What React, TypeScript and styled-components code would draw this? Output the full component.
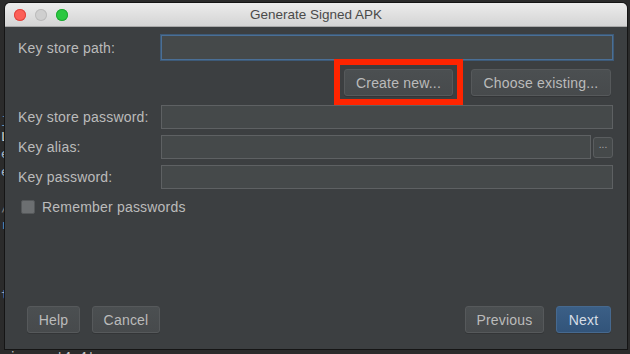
import React from 'react';
import styled, { createGlobalStyle } from 'styled-components';

const GlobalStyle = createGlobalStyle`
  html, body {
    margin: 0;
    padding: 0;
    background: #1f2022;
  }
  body {
    font-family: "Liberation Sans", Arial, sans-serif;
  }
`;

const Desktop = styled.div`
  position: relative;
  width: 630px;
  height: 354px;
  overflow: hidden;
  background: #1f2022;
`;

const Code = styled.div`
  display: flex;
  flex-direction: column;
  padding-top: 110px;
  padding-left: 1px;
  font-family: "DejaVu Sans Mono", "Liberation Mono", monospace;
  font-size: 13px;
  line-height: 17.6px;
  background: #2b2b2b;
  height: 100%;
  box-sizing: border-box;
  overflow: hidden;
`;

const CodeLine = styled.div<{ $color?: string }>`
  white-space: pre;
  color: ${(p) => p.$color || '#a9b7c6'};
  height: 17.6px;
`;

const LastLine = styled(CodeLine)`
  margin-top: auto;
  margin-bottom: -12px;
`;

const Window = styled.div`
  position: absolute;
  left: 5px;
  top: 3px;
  width: 622px;
  height: 346px;
  display: flex;
  flex-direction: column;
  background: #3c3f41;
  border-radius: 5px 5px 0 0;
  box-shadow: 0 0 0 1px #151515;
  overflow: hidden;
`;

const TitleBar = styled.div`
  height: 23px;
  display: flex;
  align-items: center;
  background: linear-gradient(#ececec, #d4d4d4);
  border-bottom: 1px solid #a9a9a9;
  flex-shrink: 0;
`;

const Lights = styled.div`
  width: 66px;
  display: flex;
  gap: 9px;
  padding-left: 9px;
  box-sizing: border-box;
`;

const Light = styled.span<{ $color: string; $edge: string }>`
  width: 12px;
  height: 12px;
  border-radius: 50%;
  background: ${(p) => p.$color};
  box-shadow: inset 0 0 0 1px ${(p) => p.$edge};
`;

const Title = styled.div`
  flex: 1;
  text-align: center;
  font-size: 13.5px;
  color: #4a4a4a;
`;

const Spacer = styled.div`
  width: 66px;
`;

const Body = styled.div`
  flex: 1;
  display: flex;
  flex-direction: column;
  padding: 8px 14px 16px 13px;
`;

const Row = styled.div<{ $mt?: number }>`
  display: flex;
  align-items: center;
  margin-top: ${(p) => p.$mt ?? 0}px;
`;

const Label = styled.label`
  width: 143px;
  flex-shrink: 0;
  font-size: 14px;
  letter-spacing: 0.2px;
  color: #bbbbbb;
`;

const Field = styled.div<{ $focused?: boolean; $h?: number }>`
  flex: 1;
  height: ${(p) => p.$h ?? 24}px;
  box-sizing: border-box;
  background: #45494a;
  border: 1px solid ${(p) => (p.$focused ? '#4a6f96' : '#5e6163')};
  box-shadow: ${(p) => (p.$focused ? '0 0 0 1px #3d5a78' : 'none')};
`;

const Buttons = styled.div`
  display: flex;
  justify-content: flex-end;
  gap: 18px;
  padding-right: 2px;
  margin-top: 9px;
`;

const Button = styled.button<{ $primary?: boolean; $w: number }>`
  position: relative;
  width: ${(p) => p.$w}px;
  height: 27px;
  padding: 0;
  border-radius: 3px;
  font-family: "Liberation Sans", Arial, sans-serif;
  font-size: 14px;
  letter-spacing: 0.2px;
  color: ${(p) => (p.$primary ? '#d6dde6' : '#bbbbbb')};
  background: ${(p) =>
    p.$primary ? 'linear-gradient(#3b5f86, #32547a)' : 'linear-gradient(#4b4f51, #474a4c)'};
  border: 1px solid ${(p) => (p.$primary ? '#46698f' : '#56595b')};
  box-shadow: 0 1px 0 rgba(0, 0, 0, 0.15);
`;

const Highlight = styled.span`
  position: absolute;
  left: -11px;
  right: -11px;
  top: -11px;
  bottom: -10px;
  border: 6px solid #ff2400;
  pointer-events: none;
`;

const Dots = styled.button`
  width: 20px;
  height: 21px;
  margin-left: 2px;
  padding: 0 0 5px;
  border-radius: 3px;
  background: #45494a;
  border: 1px solid #5a5d5f;
  color: #aaaaaa;
  font-family: "Liberation Sans", Arial, sans-serif;
  font-size: 10px;
  line-height: 1;
`;

const CheckRow = styled.div`
  display: flex;
  align-items: center;
  gap: 7px;
  margin-top: 10px;
  padding-left: 3px;
`;

const Box = styled.span`
  width: 14px;
  height: 14px;
  border-radius: 2px;
  background: #6c6f71;
  border: 1px solid #55585a;
  box-sizing: border-box;
`;

const CheckText = styled.span`
  font-size: 14px;
  letter-spacing: 0.2px;
  color: #bbbbbb;
`;

const Footer = styled.div`
  margin-top: auto;
  display: flex;
  align-items: center;
  gap: 12px;
  padding-left: 9px;
  padding-right: 2px;
`;

const Grow = styled.div`
  flex: 1;
`;

const codeLines: [string, string?][] = [
  ['j', '#6897bb'],
  ['L', '#d0d0d0'],
  ['e', '#a9b7c6'],
  ['e', '#a9b7c6'],
  [''],
  ['/', '#808080'],
  ['r', '#6897bb'],
  [''],
  [''],
  [''],
  ['t', '#a9b7c6'],
];

export default function App() {
  return (
    <Desktop>
      <GlobalStyle />
      <Code>
        {codeLines.map(([t, c], i) => (
          <CodeLine key={i} $color={c}>
            {t}
          </CodeLine>
        ))}
        <LastLine $color="#c8c8c8">sion = '4.4'</LastLine>
      </Code>
      <Window>
        <TitleBar>
          <Lights>
            <Light $color="#fc5f57" $edge="#e0443e" />
            <Light $color="#cfcfcf" $edge="#bcbcbc" />
            <Light $color="#2ac840" $edge="#1fa934" />
          </Lights>
          <Title>Generate Signed APK</Title>
          <Spacer />
        </TitleBar>
        <Body>
          <Row>
            <Label>Key store path:</Label>
            <Field $focused $h={25} />
          </Row>
          <Buttons>
            <Button $w={109}>
              Create new...
              <Highlight />
            </Button>
            <Button $w={140}>Choose existing...</Button>
          </Buttons>
          <Row $mt={9}>
            <Label>Key store password:</Label>
            <Field />
          </Row>
          <Row $mt={6}>
            <Label>Key alias:</Label>
            <Field />
            <Dots>...</Dots>
          </Row>
          <Row $mt={6}>
            <Label>Key password:</Label>
            <Field />
          </Row>
          <CheckRow>
            <Box />
            <CheckText>Remember passwords</CheckText>
          </CheckRow>
          <Footer>
            <Button $w={53}>Help</Button>
            <Button $w={68}>Cancel</Button>
            <Grow />
            <Button $w={79}>Previous</Button>
            <Button $primary $w={55}>Next</Button>
          </Footer>
        </Body>
      </Window>
    </Desktop>
  );
}
